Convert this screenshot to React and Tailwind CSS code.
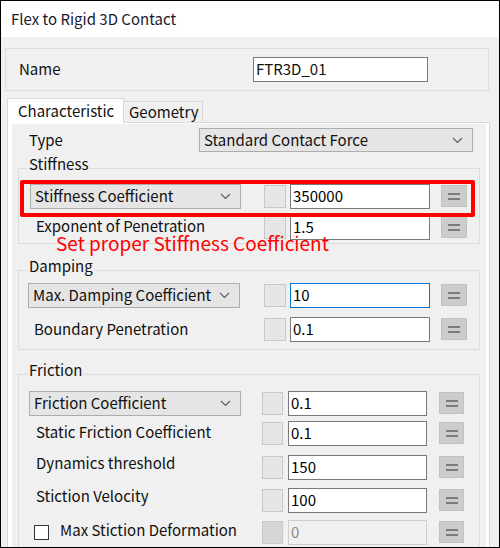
import React from "react";

function Chevron() {
  return (
    <svg width="11" height="7" viewBox="0 0 11 7" className="shrink-0">
      <polyline points="1,1 5.5,5.5 10,1" fill="none" stroke="#606060" strokeWidth="1.2" />
    </svg>
  );
}

function Select({ text, className }) {
  return (
    <div className={"flex items-center justify-between border border-[#adadad] bg-[#e5e5e5] pl-[4px] pr-[9px] " + className}>
      <span className="whitespace-nowrap">{text}</span>
      <Chevron />
    </div>
  );
}

function EqButton({ className }) {
  return (
    <div className={"flex flex-col items-center justify-center gap-[3px] border border-[#c2c2c2] bg-[#cccccc] " + className}>
      <div className="h-[2px] w-[12px] bg-[#7a7a7a]" />
      <div className="h-[2px] w-[12px] bg-[#7a7a7a]" />
    </div>
  );
}

function ValueRow({ left, value, focused, disabled, friction, className }) {
  return (
    <div className={"flex h-[26px] items-center " + className}>
      {friction ? <div className="w-[243px]">{left}</div> : <div className="w-[245px]">{left}</div>}
      <div
        className={
          "h-[23px] border " +
          (disabled ? "border-[#c8c8c8] bg-[#d6d6d6] " : "border-[#c8c8c8] bg-[#e6e6e6] ") +
          (friction ? "w-[21px]" : "w-[22px]")
        }
      />
      <div
        className={
          "flex h-[25px] items-center pl-[2px] " +
          (focused
            ? "border border-[#0078d7] bg-white text-black "
            : disabled
            ? "border border-[#cfcfcf] bg-[#f0f0f0] text-[#8a8a8a] "
            : "border border-[#7a7a7a] bg-white text-black ") +
          (friction ? "ml-[5px] w-[139px]" : "ml-[4px] w-[140px]")
        }
      >
        {value}
      </div>
      <EqButton className={friction ? "ml-[12px] h-[22px] w-[25px]" : "ml-[11px] h-[22px] w-[26px]"} />
    </div>
  );
}

function Label({ text, pad }) {
  return <div className={"whitespace-nowrap " + pad}>{text}</div>;
}

function Legend({ text }) {
  return (
    <div className="-mt-[13px] ml-[9px] w-fit bg-[#f0f0f0] px-[1px] leading-[16px]">{text}</div>
  );
}

export default function App() {
  return (
    <div className="relative h-[548px] w-[500px] overflow-hidden border border-black bg-[#f0f0f0] font-['Noto_Sans_CJK_KR','Noto_Sans',sans-serif] text-[15px] text-[#111]">
      <div className="flex h-[36px] items-center bg-white pl-[10px] text-[#1a1a2e]">Flex to Rigid 3D Contact</div>

      <div className="ml-[4px] mt-[11px] flex h-[43px] w-[484px] items-center border border-[#dcdcdc]">
        <div className="w-[247px] pl-[13px]">Name</div>
        <div className="flex h-[25px] w-[175px] items-center border border-[#7a7a7a] bg-white pl-[2px]">FTR3D_01</div>
      </div>

      <div className="ml-[6px] mt-[7px] flex h-[24px] items-start">
        <div className="relative z-10 flex h-[25px] w-[117px] items-center border border-b-0 border-[#d9d9d9] bg-white pl-[10px]">
          Characteristic
        </div>
        <div className="mt-[3px] flex h-[21px] w-[79px] items-center border border-b-0 border-l-0 border-[#d9d9d9] bg-[#f0f0f0] pl-[5px]">
          Geometry
        </div>
      </div>

      <div className="ml-[6px] h-[440px] w-[483px] border border-[#d9d9d9] bg-white pb-0 pl-[4px] pr-[3px] pt-[1px]">
        <div className="h-full bg-[#f0f0f0]">
          <div className="flex h-[24px] items-center pt-[4px] box-content">
            <div className="w-[187px] pl-[17px]">Type</div>
            <Select text="Standard Contact Force" className="h-[24px] w-[274px]" />
          </div>

          <div className="ml-[6px] mt-[16px] h-[76px] w-[462px] border border-[#dcdcdc]">
            <Legend text="Stiffness" />
            <ValueRow
              className="mt-[11px]"
              left={<div className="pl-[11px]"><Select text="Stiffness Coefficient" className="h-[25px] w-[211px]" /></div>}
              value="350000"
            />
            <ValueRow
              className="mt-[5px]"
              left={<Label text="Exponent of Penetration" pad="pl-[17px] -mt-[2px]" />}
              value="1.5"
            />
          </div>

          <div className="ml-[6px] mt-[26px] h-[80px] w-[462px] border border-[#dcdcdc]">
            <Legend text="Damping" />
            <ValueRow
              className="mt-[8px]"
              left={<div className="pl-[9px]"><Select text="Max. Damping Coefficient" className="h-[25px] w-[212px]" /></div>}
              value="10"
              focused
            />
            <ValueRow
              className="mt-[8px]"
              left={<Label text="Boundary Penetration" pad="pl-[15px]" />}
              value="0.1"
            />
          </div>

          <div className="ml-[6px] mt-[24px] h-[200px] w-[462px] border border-[#dcdcdc]">
            <Legend text="Friction" />
            <ValueRow
              friction
              className="mt-[12px]"
              left={<div className="pl-[10px]"><Select text="Friction Coefficient" className="h-[25px] w-[212px]" /></div>}
              value="0.1"
            />
            <ValueRow
              friction
              className="mt-[4px]"
              left={<Label text="Static Friction Coefficient" pad="pl-[17px] -mt-[2px]" />}
              value="0.1"
            />
            <ValueRow
              friction
              className="mt-[8px]"
              left={<Label text="Dynamics threshold" pad="pl-[17px] -mt-[8px]" />}
              value="150"
            />
            <ValueRow
              friction
              className="mt-[7px]"
              left={<Label text="Stiction Velocity" pad="pl-[17px] -mt-[8px]" />}
              value="100"
            />
            <ValueRow
              friction
              disabled
              className="mt-[6px]"
              left={
                <div className="flex items-center pl-[15px] -mt-[2px]">
                  <div className="mt-[2px] h-[15px] w-[15px] border border-[#333] bg-white" />
                  <span className="ml-[11px] -mt-[2px] whitespace-nowrap">Max Stiction Deformation</span>
                </div>
              }
              value="0"
            />
          </div>
        </div>
      </div>

      <div className="absolute left-[19px] top-[179px] h-[37px] w-[455px] rounded-[2px] border-4 border-[#ff0000]" />
      <div className="absolute left-[55px] top-[230px] whitespace-nowrap text-[19px] leading-[24px] text-[#ff0000]">
        Set proper Stiffness Coefficient
      </div>
    </div>
  );
}
